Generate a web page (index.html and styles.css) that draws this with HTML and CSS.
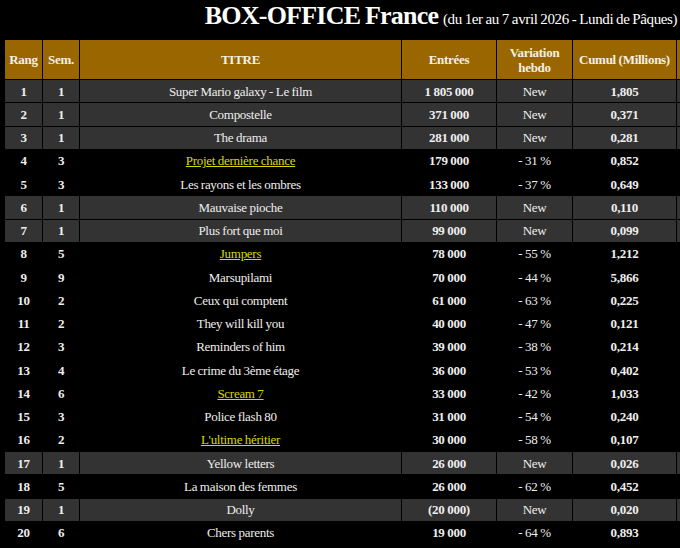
FILE: index.html
```html
<!DOCTYPE html>
<html lang="fr">
<head>
<meta charset="utf-8">
<title>Box-office France</title>
<link rel="stylesheet" href="styles.css">
</head>
<body>
<div class="page">
  <h1 class="title">BOX-OFFICE France <span class="sub">(du 1er au 7 avril 2026 - Lundi de Pâques)</span></h1>
  <table class="bo">
    <colgroup>
      <col class="c-rang"><col class="c-sem"><col class="c-titre"><col class="c-entrees"><col class="c-var"><col class="c-cumul"><col class="c-extra">
    </colgroup>
    <thead>
      <tr><th>Rang</th><th>Sem.</th><th>TITRE</th><th>Entrées</th><th>Variation hebdo</th><th>Cumul (Millions)</th><th></th></tr>
    </thead>
    <tbody>
      <tr class="new"><td class="b">1</td><td class="b">1</td><td>Super Mario galaxy - Le film</td><td class="b">1 805 000</td><td>New</td><td class="b">1,805</td><td></td></tr>
      <tr class="new"><td class="b">2</td><td class="b">1</td><td>Compostelle</td><td class="b">371 000</td><td>New</td><td class="b">0,371</td><td></td></tr>
      <tr class="new"><td class="b">3</td><td class="b">1</td><td>The drama</td><td class="b">281 000</td><td>New</td><td class="b">0,281</td><td></td></tr>
      <tr><td class="b">4</td><td class="b">3</td><td><a href="#">Projet dernière chance</a></td><td class="b">179 000</td><td>- 31 %</td><td class="b">0,852</td><td></td></tr>
      <tr><td class="b">5</td><td class="b">3</td><td>Les rayons et les ombres</td><td class="b">133 000</td><td>- 37 %</td><td class="b">0,649</td><td></td></tr>
      <tr class="new"><td class="b">6</td><td class="b">1</td><td>Mauvaise pioche</td><td class="b">110 000</td><td>New</td><td class="b">0,110</td><td></td></tr>
      <tr class="new"><td class="b">7</td><td class="b">1</td><td>Plus fort que moi</td><td class="b">99 000</td><td>New</td><td class="b">0,099</td><td></td></tr>
      <tr><td class="b">8</td><td class="b">5</td><td><a href="#">Jumpers</a></td><td class="b">78 000</td><td>- 55 %</td><td class="b">1,212</td><td></td></tr>
      <tr><td class="b">9</td><td class="b">9</td><td>Marsupilami</td><td class="b">70 000</td><td>- 44 %</td><td class="b">5,866</td><td></td></tr>
      <tr><td class="b">10</td><td class="b">2</td><td>Ceux qui comptent</td><td class="b">61 000</td><td>- 63 %</td><td class="b">0,225</td><td></td></tr>
      <tr><td class="b">11</td><td class="b">2</td><td>They will kill you</td><td class="b">40 000</td><td>- 47 %</td><td class="b">0,121</td><td></td></tr>
      <tr><td class="b">12</td><td class="b">3</td><td>Reminders of him</td><td class="b">39 000</td><td>- 38 %</td><td class="b">0,214</td><td></td></tr>
      <tr><td class="b">13</td><td class="b">4</td><td>Le crime du 3ème étage</td><td class="b">36 000</td><td>- 53 %</td><td class="b">0,402</td><td></td></tr>
      <tr><td class="b">14</td><td class="b">6</td><td><a href="#">Scream 7</a></td><td class="b">33 000</td><td>- 42 %</td><td class="b">1,033</td><td></td></tr>
      <tr><td class="b">15</td><td class="b">3</td><td>Police flash 80</td><td class="b">31 000</td><td>- 54 %</td><td class="b">0,240</td><td></td></tr>
      <tr><td class="b">16</td><td class="b">2</td><td><a href="#">L'ultime héritier</a></td><td class="b">30 000</td><td>- 58 %</td><td class="b">0,107</td><td></td></tr>
      <tr class="new"><td class="b">17</td><td class="b">1</td><td>Yellow letters</td><td class="b">26 000</td><td>New</td><td class="b">0,026</td><td></td></tr>
      <tr><td class="b">18</td><td class="b">5</td><td>La maison des femmes</td><td class="b">26 000</td><td>- 62 %</td><td class="b">0,452</td><td></td></tr>
      <tr class="new"><td class="b">19</td><td class="b">1</td><td>Dolly</td><td class="b">(20 000)</td><td>New</td><td class="b">0,020</td><td></td></tr>
      <tr><td class="b">20</td><td class="b">6</td><td>Chers parents</td><td class="b">19 000</td><td>- 64 %</td><td class="b">0,893</td><td></td></tr>
    </tbody>
  </table>
</div>
</body>
</html>
```

FILE: styles.css
```css
html, body {
  margin: 0;
  padding: 0;
  background: #000;
  overflow: hidden;
}
body {
  font-family: "Liberation Serif", "Times New Roman", serif;
  color: #eee;
}
.page {
  width: 882px;
}
.title {
  margin: 0;
  height: 39px;
  text-align: center;
  font-size: 26px;
  line-height: 32px;
  font-weight: bold;
  color: #fff;
  letter-spacing: -0.03em;
  word-spacing: -1px;
}
.title .sub {
  font-size: 15px;
  font-weight: normal;
  letter-spacing: -0.025em;
  word-spacing: -0.5px;
}
.bo {
  margin-left: 4px;
  border-collapse: separate;
  border-spacing: 1px;
  table-layout: fixed;
  width: 874px;
  font-size: 13px;
}
.c-rang { width: 37px; }
.c-sem { width: 36px; }
.c-titre { width: 321px; }
.c-entrees { width: 94px; }
.c-var { width: 75px; }
.c-cumul { width: 103px; }
.c-extra { width: 200px; }
.bo th,
.bo td {
  letter-spacing: -0.022em;
  word-spacing: -0.3px;
  padding: 0 2px;
  text-align: center;
  vertical-align: middle;
  line-height: 15px;
}
.bo th {
  background: #996600;
  color: #f4f0e8;
  font-weight: bold;
  height: 39px;
}
.bo td {
  height: 22.26px;
  box-sizing: border-box;
}
.bo tr.new td {
  background: #333;
}
.bo td.b {
  font-weight: bold;
}
.bo a {
  color: #d8d800;
  text-decoration: underline;
}
```
